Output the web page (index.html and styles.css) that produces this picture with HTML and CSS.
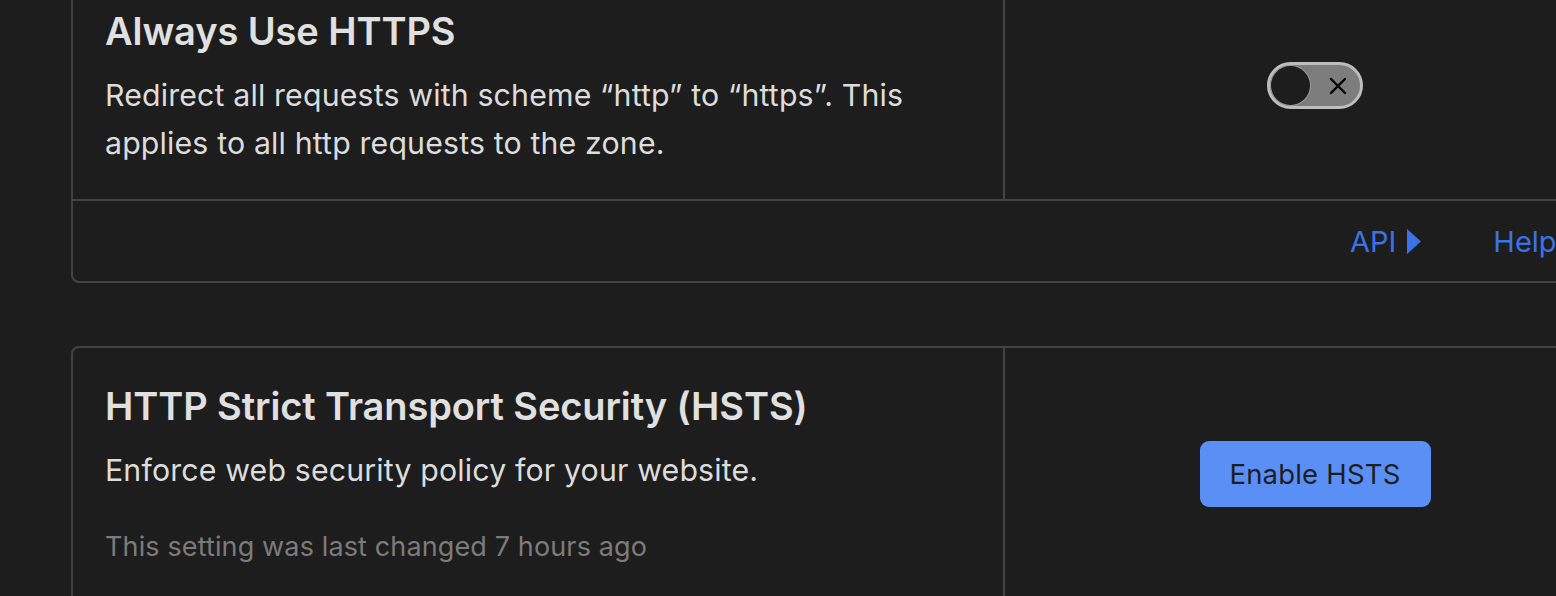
FILE: index.html
```html
<!DOCTYPE html>
<html>
<head>
<meta charset="utf-8">
<link rel="stylesheet" href="styles.css">
</head>
<body>
<div class="page">
  <section class="card card-first">
    <div class="row">
      <div class="cell-text">
        <h2 class="title">Always Use HTTPS</h2>
        <p class="desc">Redirect all requests with scheme “http” to “https”. This applies to all http requests to the zone.</p>
      </div>
      <div class="cell-control">
        <div class="toggle">
          <span class="knob"></span>
          <svg class="x" viewBox="0 0 20 20" width="20" height="20"><path d="M3 3 L17 17 M17 3 L3 17" stroke="#000" stroke-width="2.4" stroke-linecap="round"/></svg>
        </div>
      </div>
    </div>
    <div class="footer">
      <a class="link">API<svg class="tri" viewBox="0 0 14 25" width="14" height="25"><path d="M0 0 L14 12.5 L0 25 Z" fill="currentColor"/></svg></a>
      <a class="link">Help</a>
    </div>
  </section>
  <section class="card card-second">
    <div class="row">
      <div class="cell-text">
        <h2 class="title">HTTP Strict Transport Security (HSTS)</h2>
        <p class="desc">Enforce web security policy for your website.</p>
        <p class="meta">This setting was last changed 7 hours ago</p>
      </div>
      <div class="cell-control">
        <button class="btn">Enable HSTS</button>
      </div>
    </div>
  </section>
</div>
</body>
</html>
```
FILE: styles.css
```css
html, body {
  margin: 0;
  padding: 0;
  background: #1d1d1d;
  overflow: hidden;
}
body {
  width: 1556px;
  height: 596px;
  font-family: Inter, "Noto Sans", sans-serif;
  color: #dedede;
}
.page {
  padding-left: 71px;
  margin-top: -29px;
  display: flex;
  flex-direction: column;
  gap: 63px;
}
.card {
  width: 1600px;
  border: 2px solid #434343;
  border-radius: 8px;
  box-sizing: border-box;
}
.row {
  display: grid;
  grid-template-columns: 932px 620px;
}
.cell-text {
  padding: 35px 32px 32px 32px;
  border-right: 2px solid #434343;
}
.card-second .cell-text {
  padding-bottom: 60px;
}
.title {
  margin: 0;
  font-size: 38px;
  font-weight: 600;
  line-height: 46px;
  color: #e0e0e0;
  letter-spacing: -0.1px;
}
.desc {
  margin: 17px 0 0 0;
  font-size: 30.3px;
  line-height: 48px;
  font-weight: 400;
  color: #dcdcdc;
  letter-spacing: 0.15px;
  max-width: 840px;
}
.meta {
  margin: 36px 0 0 0;
  font-size: 27px;
  line-height: 34px;
  color: #7b7b7b;
  letter-spacing: 0.13px;
}
.cell-control {
  display: flex;
  justify-content: center;
  align-items: flex-start;
  padding-top: 89px;
}
.card-second .cell-control {
  padding-top: 93px;
}
.toggle {
  width: 96px;
  height: 47px;
  box-sizing: border-box;
  border: 3px solid #bdbdbd;
  border-radius: 24px;
  background: #7d7d7d;
  display: flex;
  align-items: center;
  justify-content: space-between;
  padding: 0 12px 0 1px;
}
.knob {
  width: 39px;
  height: 39px;
  border-radius: 50%;
  background: #1d1d1d;
  box-shadow: 0 0 0 1px #9a9a9a;
}
.footer {
  border-top: 2px solid #434343;
  height: 80px;
  display: flex;
  align-items: center;
  padding-left: 1277px;
  gap: 72px;
}
.link {
  color: #3a73e6;
  font-size: 29px;
  display: flex;
  align-items: center;
  gap: 11px;
}
.tri {
  width: 14px;
  height: 25px;
}
.btn {
  width: 231px;
  height: 66px;
  border: none;
  border-radius: 9px;
  background: #5a8ff6;
  color: #1e1e1e;
  font-family: Inter, "Noto Sans", sans-serif;
  font-size: 27.5px;
  letter-spacing: 0.2px;
}
```
